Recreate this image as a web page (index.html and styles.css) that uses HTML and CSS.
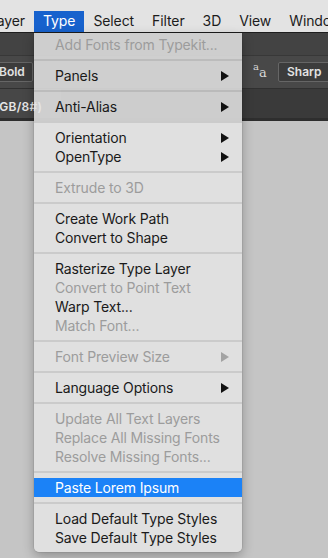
FILE: index.html
```html
<!DOCTYPE html>
<html lang="en">
  <head>
    <meta charset="UTF-8" />
    <title>Type menu</title>
    <link rel="stylesheet" href="styles.css">
  </head>
  <body>
    <div class="screen">
      <header class="menubar">
        <div class="mb-item mb-first">Layer</div>
        <div class="mb-item active">Type</div>
        <div class="mb-item">Select</div>
        <div class="mb-item">Filter</div>
        <div class="mb-item">3D</div>
        <div class="mb-item">View</div>
        <div class="mb-item">Window</div>
      </header>

      <div class="app">
        <div class="toolhead"></div>
        <div class="options">
          <div class="field field-font">Bold</div>
          <div class="aa"><span class="aa-small">a</span><span class="aa-big">a</span></div>
          <div class="field field-aa">Sharp</div>
        </div>
        <div class="tabs">
          <div class="tab">RGB/8#)</div>
        </div>
        <div class="canvas"></div>
      </div>

      <!-- dropdown for the Type menu -->
      <div class="menu">
        <div class="item disabled">Add Fonts from Typekit...</div>
        <div class="sep"></div>
        <div class="item sub">Panels</div>
        <div class="sep"></div>
        <div class="item sub">Anti-Alias</div>
        <div class="sep"></div>
        <div class="item sub">Orientation</div>
        <div class="item sub">OpenType</div>
        <div class="sep"></div>
        <div class="item disabled">Extrude to 3D</div>
        <div class="sep"></div>
        <div class="item">Create Work Path</div>
        <div class="item">Convert to Shape</div>
        <div class="sep"></div>
        <div class="item">Rasterize Type Layer</div>
        <div class="item disabled">Convert to Point Text</div>
        <div class="item">Warp Text...</div>
        <div class="item disabled">Match Font...</div>
        <div class="sep"></div>
        <div class="item sub disabled">Font Preview Size</div>
        <div class="sep"></div>
        <div class="item sub">Language Options</div>
        <div class="sep"></div>
        <div class="item disabled">Update All Text Layers</div>
        <div class="item disabled">Replace All Missing Fonts</div>
        <div class="item disabled">Resolve Missing Fonts...</div>
        <div class="sep"></div>
        <div class="item selected">Paste Lorem Ipsum</div>
        <div class="sep"></div>
        <div class="item">Load Default Type Styles</div>
        <div class="item">Save Default Type Styles</div>
      </div>
    </div>
  </body>
</html>
```

FILE: styles.css
```css
* {
  margin: 0;
  padding: 0;
  box-sizing: border-box;
}

body {
  width: 328px;
  height: 558px;
  overflow: hidden;
  font-family: Inter, "Liberation Sans", Arial, sans-serif;
  background: #c5c5c5;
}

.screen {
  position: relative;
  height: 558px;
  display: flex;
  flex-direction: column;
}

/* Top menu bar */
.menubar {
  height: 33px;
  display: flex;
  align-items: flex-end;
  background: #e3e3e3;
  border-bottom: 1px solid #1e1e1e;
  font-size: 14px;
  letter-spacing: -0.1px;
  color: #1c1c1c;
  white-space: nowrap;
}

.mb-item {
  height: 21px;
  line-height: 20px;
  padding: 0 9px;
}

.mb-first {
  flex: 0 0 34px;
  display: flex;
  justify-content: flex-end;
  overflow: hidden;
}

.mb-item.active {
  background: #1762cd;
  color: #fff;
}

/* Photoshop chrome below the bar */
.app {
  flex: 1;
  display: flex;
  flex-direction: column;
}

.toolhead {
  height: 22px;
  background: #434343;
}

.options {
  height: 33px;
  display: flex;
  align-items: center;
  background: #484848;
  border-top: 1px solid #383838;
  color: #e2e2e2;
  font-size: 12px;
  font-weight: 600;
}

.field {
  height: 20px;
  line-height: 18px;
  border: 1px solid #666;
  border-radius: 2px;
  background: #3c3c3c;
}

.field-font {
  width: 50px;
  margin-left: -17px;
  padding-left: 15px;
}

.aa {
  margin-left: auto;
  width: 25px;
  font-family: "DejaVu Serif", serif;
  font-weight: 400;
  color: #d8d8d8;
  display: flex;
  align-items: flex-start;
}

.aa-small {
  font-size: 10px;
  line-height: 10px;
  margin-top: -4px;
}

.aa-big {
  font-size: 13px;
  line-height: 13px;
}

.field-aa {
  width: 60px;
  margin-right: -10px;
  padding-left: 8px;
}

.tabs {
  height: 33px;
  display: flex;
  align-items: stretch;
  background: #3a3a3a;
  border-top: 1px solid #303030;
  border-bottom: 3px solid #2e2e2e;
}

.tab {
  width: 70px;
  margin-left: -9px;
  padding-top: 10px;
  background: #474747;
  color: #e6e6e6;
  font-size: 12px;
  font-weight: 600;
  letter-spacing: 0.3px;
}

.canvas {
  flex: 1;
  background: #c5c5c5;
}

/* Dropdown */
.menu {
  position: absolute;
  left: 34px;
  top: 33px;
  width: 208px;
  padding: 2px 0 5px;
  background: rgba(228, 228, 228, 0.87);
  border-radius: 0 0 5px 5px;
  box-shadow: 0 4px 12px rgba(0, 0, 0, 0.28), 0 0 0 0.5px rgba(0, 0, 0, 0.12);
  font-size: 14px;
  letter-spacing: -0.15px;
  color: #1a1a1a;
}

.item {
  height: 19px;
  line-height: 19px;
  padding: 0 13px 0 21px;
  display: flex;
  justify-content: space-between;
  align-items: center;
  white-space: nowrap;
}

.item.sub::after {
  content: "";
  width: 0;
  height: 0;
  border-top: 5px solid transparent;
  border-bottom: 5px solid transparent;
  border-left: 8px solid #111;
}

.item.disabled {
  color: #9c9c9c;
}

.item.disabled.sub::after {
  border-left-color: #a3a3a3;
}

.item.selected {
  background: #1b82f7;
  color: #fff;
}

.sep {
  height: 2px;
  margin: 5px 0;
  background: rgba(0, 0, 0, 0.09);
}
```
